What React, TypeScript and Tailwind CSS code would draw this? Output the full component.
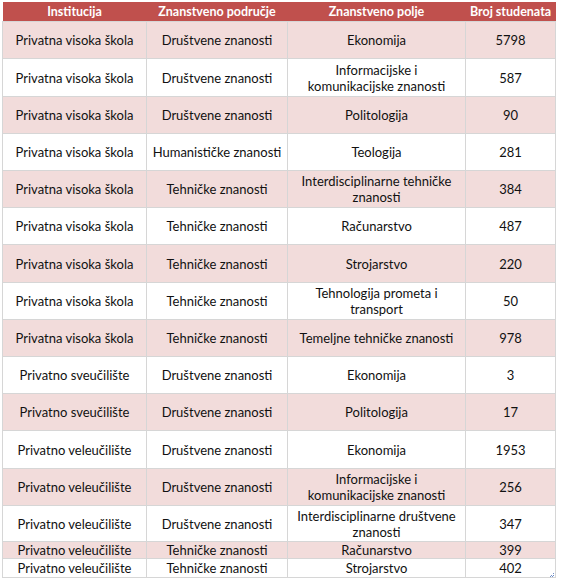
import React from "react";

type Row = { inst: string; pod: string; polje: string[]; broj: string; h: number };

const rows: Row[] = [
  { inst: "Privatna visoka škola", pod: "Društvene znanosti", polje: ["Ekonomija"], broj: "5798", h: 37 },
  { inst: "Privatna visoka škola", pod: "Društvene znanosti", polje: ["Informacijske i", "komunikacijske znanosti"], broj: "587", h: 38 },
  { inst: "Privatna visoka škola", pod: "Društvene znanosti", polje: ["Politologija"], broj: "90", h: 37 },
  { inst: "Privatna visoka škola", pod: "Humanističke znanosti", polje: ["Teologija"], broj: "281", h: 37 },
  { inst: "Privatna visoka škola", pod: "Tehničke znanosti", polje: ["Interdisciplinarne tehničke", "znanosti"], broj: "384", h: 37 },
  { inst: "Privatna visoka škola", pod: "Tehničke znanosti", polje: ["Računarstvo"], broj: "487", h: 37 },
  { inst: "Privatna visoka škola", pod: "Tehničke znanosti", polje: ["Strojarstvo"], broj: "220", h: 38 },
  { inst: "Privatna visoka škola", pod: "Tehničke znanosti", polje: ["Tehnologija prometa i", "transport"], broj: "50", h: 37 },
  { inst: "Privatna visoka škola", pod: "Tehničke znanosti", polje: ["Temeljne tehničke znanosti"], broj: "978", h: 37 },
  { inst: "Privatno sveučilište", pod: "Društvene znanosti", polje: ["Ekonomija"], broj: "3", h: 37 },
  { inst: "Privatno sveučilište", pod: "Društvene znanosti", polje: ["Politologija"], broj: "17", h: 37 },
  { inst: "Privatno veleučilište", pod: "Društvene znanosti", polje: ["Ekonomija"], broj: "1953", h: 38 },
  { inst: "Privatno veleučilište", pod: "Društvene znanosti", polje: ["Informacijske i", "komunikacijske znanosti"], broj: "256", h: 37 },
  { inst: "Privatno veleučilište", pod: "Društvene znanosti", polje: ["Interdisciplinarne društvene", "znanosti"], broj: "347", h: 36 },
  { inst: "Privatno veleučilište", pod: "Tehničke znanosti", polje: ["Računarstvo"], broj: "399", h: 17 },
  { inst: "Privatno veleučilište", pod: "Tehničke znanosti", polje: ["Strojarstvo"], broj: "402", h: 19 },
];

export default function App() {
  return (
    <div
      className="w-[561px] h-[585px] bg-white pl-[2px] pt-[2px] text-[13px] text-[#111111]"
      style={{ fontFamily: "Lato, 'Open Sans', sans-serif" }}
    >
      <div className="relative w-[553px]">
        <table className="w-[553px] table-fixed border-collapse">
          <colgroup>
            <col className="w-[144px]" />
            <col className="w-[141px]" />
            <col className="w-[178px]" />
            <col className="w-[90px]" />
          </colgroup>
          <thead>
            <tr className="h-[19px] bg-[#c0504d] text-white font-bold text-[12.5px] leading-[19px]">
              <th className="p-0 font-bold">Institucija</th>
              <th className="p-0 font-bold">Znanstveno područje</th>
              <th className="p-0 font-bold">Znanstveno polje</th>
              <th className="p-0 font-bold">Broj studenata</th>
            </tr>
          </thead>
          <tbody>
            {rows.map((r, i) => (
              <tr
                key={i}
                className={i % 2 === 0 ? "bg-[#f2dcdb]" : "bg-white"}
                style={{ height: r.h }}
              >
                <td className="p-0 text-center border border-[#d6d6d6] leading-[16px] whitespace-nowrap">{r.inst}</td>
                <td className="p-0 text-center border border-[#d6d6d6] leading-[16px] whitespace-nowrap">{r.pod}</td>
                <td className="p-0 text-center border border-[#d6d6d6] leading-[16px] whitespace-nowrap">
                  {r.polje.map((l, j) => (
                    <div key={j}>{l}</div>
                  ))}
                </td>
                <td className="p-0 text-center border border-[#d6d6d6] leading-[16px]">{r.broj}</td>
              </tr>
            ))}
          </tbody>
        </table>
        <svg className="absolute right-[1px] bottom-[1px]" width="4" height="4" viewBox="0 0 4 4">
          <rect x="3" y="0" width="1" height="1" fill="#6f8fc9" />
          <rect x="1" y="2" width="1" height="1" fill="#6f8fc9" />
          <rect x="3" y="2" width="1" height="1" fill="#6f8fc9" />
          <rect x="0" y="3" width="1" height="1" fill="#6f8fc9" />
          <rect x="2" y="3" width="1" height="1" fill="#6f8fc9" />
        </svg>
      </div>
    </div>
  );
}
